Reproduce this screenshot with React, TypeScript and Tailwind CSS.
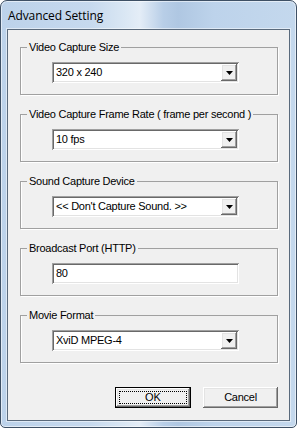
import React from "react";

const sunken =
  "shadow-[inset_1px_1px_0_#a0a0a0,inset_-1px_-1px_0_#ffffff,inset_2px_2px_0_#696969,inset_-2px_-2px_0_#e3e3e3]";
const raised =
  "shadow-[inset_-1px_-1px_0_#696969,inset_1px_1px_0_#ffffff,inset_-2px_-2px_0_#a0a0a0,inset_2px_2px_0_#e3e3e3]";

function Arrow() {
  return (
    <svg width="7" height="4" viewBox="0 0 7 4" className="block">
      <polygon points="0,0 7,0 3.5,4" fill="#000" />
    </svg>
  );
}

function Combo({ value }: { value: string }) {
  return (
    <div className={`w-[187px] h-[21px] bg-white flex items-stretch p-[2px] ${sunken}`}>
      <div className="flex-1 flex items-center pl-[2px] text-[11px] leading-none tracking-[-0.25px] text-black">{value}</div>
      <div className={`w-[16px] bg-[#f0f0f0] flex items-center justify-center pt-[1px] ${raised}`}>
        <Arrow />
      </div>
    </div>
  );
}

function Edit({ value }: { value: string }) {
  return (
    <div className={`w-[187px] h-[21px] bg-white flex items-center p-[2px] ${sunken}`}>
      <div className="pl-[2px] text-[11px] leading-none tracking-[-0.25px] text-black">{value}</div>
    </div>
  );
}

function Group({ label, children }: { label: string; children: React.ReactNode }) {
  return (
    <fieldset className="w-[258px] h-[54px] border border-[#a0a0a0] shadow-[inset_1px_0_0_#ffffff,1px_1px_0_#ffffff] m-0 p-0 min-w-0">
      <legend className="ml-[6px] px-[2px] text-[11px] leading-[13px] h-[13px] tracking-[-0.25px] text-black">{label}</legend>
      <div className="pt-[8px] pl-[31px]">{children}</div>
    </fieldset>
  );
}

export default function App() {
  return (
    <div className="w-[297px] h-[428px] font-['Liberation_Sans',Arial,sans-serif]">
      <div className="w-[297px] h-[428px] rounded-t-[7px] rounded-b-[5px] border border-[#3e5065] bg-[linear-gradient(90deg,#bcd2ea_0%,#c6d9ee_30%,#dae7f4_42%,#e4edf7_47%,#b8cee7_55%,#afc7e2_60%,#bdd3eb_72%,#c4d8ed_100%)] shadow-[inset_0_0_0_1px_rgba(255,255,255,0.55)] flex flex-col px-[6px] pb-[6px] overflow-hidden">
        <div className="h-[28px] flex items-center pl-[1px] pt-[2px] font-['Open_Sans',sans-serif] text-[12px] tracking-[-0.1px] text-black">
          Advanced Setting
        </div>
        <div className="flex-1 border border-[#5a6a7c] bg-[#f0f0f0] shadow-[0_0_0_1px_rgba(255,255,255,0.5)] pt-[11px] pl-[12px] flex flex-col">
          <div className="flex flex-col gap-[13px]">
            <Group label="Video Capture Size">
              <Combo value="320 x 240" />
            </Group>
            <Group label="Video Capture Frame Rate ( frame per second )">
              <Combo value="10 fps" />
            </Group>
            <Group label="Sound Capture Device">
              <Combo value="<< Don't Capture Sound. >>" />
            </Group>
            <Group label="Broadcast Port (HTTP)">
              <Edit value="80" />
            </Group>
            <Group label="Movie Format">
              <Combo value="XviD MPEG-4" />
            </Group>
          </div>
          <div className="w-[258px] mt-[24px] flex justify-end gap-[12px]">
            <div className={`w-[76px] h-[21px] border border-black bg-[#f0f0f0] p-[3px] ${raised}`}>
              <div className="w-full h-full border border-dotted border-black flex items-center justify-center text-[11px] leading-none text-black">
                OK
              </div>
            </div>
            <div className={`w-[75px] h-[21px] bg-[#f0f0f0] flex items-center justify-center text-[11px] leading-none tracking-[-0.25px] text-black ${raised}`}>
              Cancel
            </div>
          </div>
        </div>
      </div>
    </div>
  );
}
